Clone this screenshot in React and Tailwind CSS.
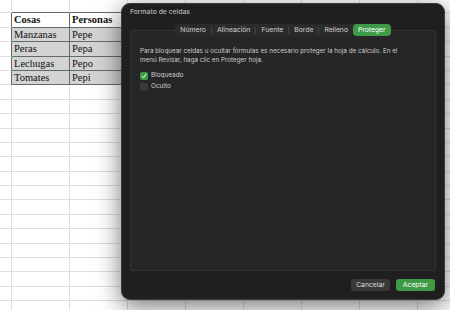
import React from "react";

const datos = [
  ["Cosas", "Personas"],
  ["Manzanas", "Pepe"],
  ["Peras", "Pepa"],
  ["Lechugas", "Pepo"],
  ["Tomates", "Pepi"],
];

const pestanas = ["Número", "Alineación", "Fuente", "Borde", "Relleno", "Proteger"];

const Hoja = () => {
  const filas = Array.from({ length: 22 }, (_, i) => i);
  const columnas = Array.from({ length: 9 }, (_, i) => i);

  return (
    <div className="flex flex-col font-['Liberation_Serif',serif]">
      {filas.map((f) => {
        const enTabla = f >= 1 && f <= 5;
        return (
          <div
            key={f}
            className={`flex shrink-0 ${f === 0 ? "h-[13.4px]" : "h-[14.4px]"}`}
          >
            {columnas.map((c) => {
              const celda = enTabla && (c === 1 || c === 2);
              const texto = celda ? datos[f - 1][c - 1] : "";
              let cls = "box-border shrink-0 border-r border-b ";
              cls += c === 0 ? "w-[12px] " : "w-[58px] ";
              if (celda) {
                cls += "border-[#5f6e64] text-[#111] pl-[2px] text-[10.5px] leading-[13px] ";
                cls += f === 1 ? "bg-white font-bold " : "bg-[#d3d3d3] ";
              } else if (f === 0 && (c === 1 || c === 2)) {
                cls += "border-r-[#dedede] border-b-[#5f6e64] ";
              } else if (enTabla && c === 0) {
                cls += "border-b-[#dedede] border-r-[#5f6e64] ";
              } else {
                cls += "border-[#dedede] ";
              }
              return (
                <div key={c} className={cls}>
                  {texto}
                </div>
              );
            })}
          </div>
        );
      })}
    </div>
  );
};

const Casilla = ({ marcada, etiqueta }) => (
  <div className="flex items-center gap-[3px] h-[11px]">
    {marcada ? (
      <div className="w-[8px] h-[8px] rounded-[2px] bg-[#3d9a46] flex items-center justify-center">
        <svg width="6" height="6" viewBox="0 0 12 12">
          <path d="M2 6.5 L5 9.5 L10 2.5" fill="none" stroke="#fff" strokeWidth="2" strokeLinecap="round" strokeLinejoin="round" />
        </svg>
      </div>
    ) : (
      <div className="w-[8px] h-[8px] rounded-[2px] bg-[#3a3a3a]" />
    )}
    <span className="text-[6.4px] text-[#d0d0d0]">{etiqueta}</span>
  </div>
);

const Dialogo = () => (
  <div className="absolute left-[121px] top-[3px] w-[324px] h-[297px] rounded-[9px] bg-[#1f1f1f] border border-[#3b3b3b] shadow-[0_6px_24px_rgba(0,0,0,0.55)] flex flex-col font-['Inter',sans-serif]">
    {/* Título */}
    <div className="pl-[8px] pt-[3px] h-[20px] text-[6.8px] leading-[9px] font-medium text-[#b8b8b8]">
      Formato de celdas
    </div>

    {/* Pestañas */}
    <div className="relative z-10 flex justify-center">
      <div className="flex items-center h-[12px] rounded-[4px] bg-[#2b2b2b] text-[6.8px] text-[#cfcfcf]">
        {pestanas.map((p, i) => (
          <React.Fragment key={p}>
            {i > 0 && i < 5 && <div className="w-px h-[7px] bg-[#444]" />}
            <div
              className={`h-[12px] flex items-center px-[5px] rounded-[4px] ${
                p === "Proteger" ? "bg-[#3d9a46] text-white" : ""
              }`}
            >
              {p}
            </div>
          </React.Fragment>
        ))}
      </div>
    </div>

    {/* Panel */}
    <div className="-mt-[6px] mx-[8px] h-[241px] rounded-[3px] bg-[#262626] border border-[#333] px-[9px] pt-[16px]">
      <p className="text-[6.3px] leading-[9px] text-[#cdcdcd] whitespace-nowrap">
        Para bloquear celdas u ocultar fórmulas es necesario proteger la hoja de cálculo. En el
        <br />
        menú Revisar, haga clic en Proteger hoja.
      </p>
      <div className="mt-[5px] flex flex-col">
        <Casilla marcada etiqueta="Bloqueado" />
        <Casilla etiqueta="Oculto" />
      </div>
    </div>

    {/* Botones */}
    <div className="flex justify-end gap-[6px] pr-[9px] pt-[8px]">
      <button className="h-[12px] w-[39px] rounded-[3px] bg-[#393939] text-[6.8px] text-[#dcdcdc] flex items-center justify-center">
        Cancelar
      </button>
      <button className="h-[12px] w-[39px] rounded-[3px] bg-[#3d9a46] text-[6.8px] text-white flex items-center justify-center">
        Aceptar
      </button>
    </div>
  </div>
);

const App = () => {
  return (
    <div className="relative w-[450px] h-[310px] overflow-hidden bg-white">
      <Hoja />
      <Dialogo />
    </div>
  );
};

export default App;
